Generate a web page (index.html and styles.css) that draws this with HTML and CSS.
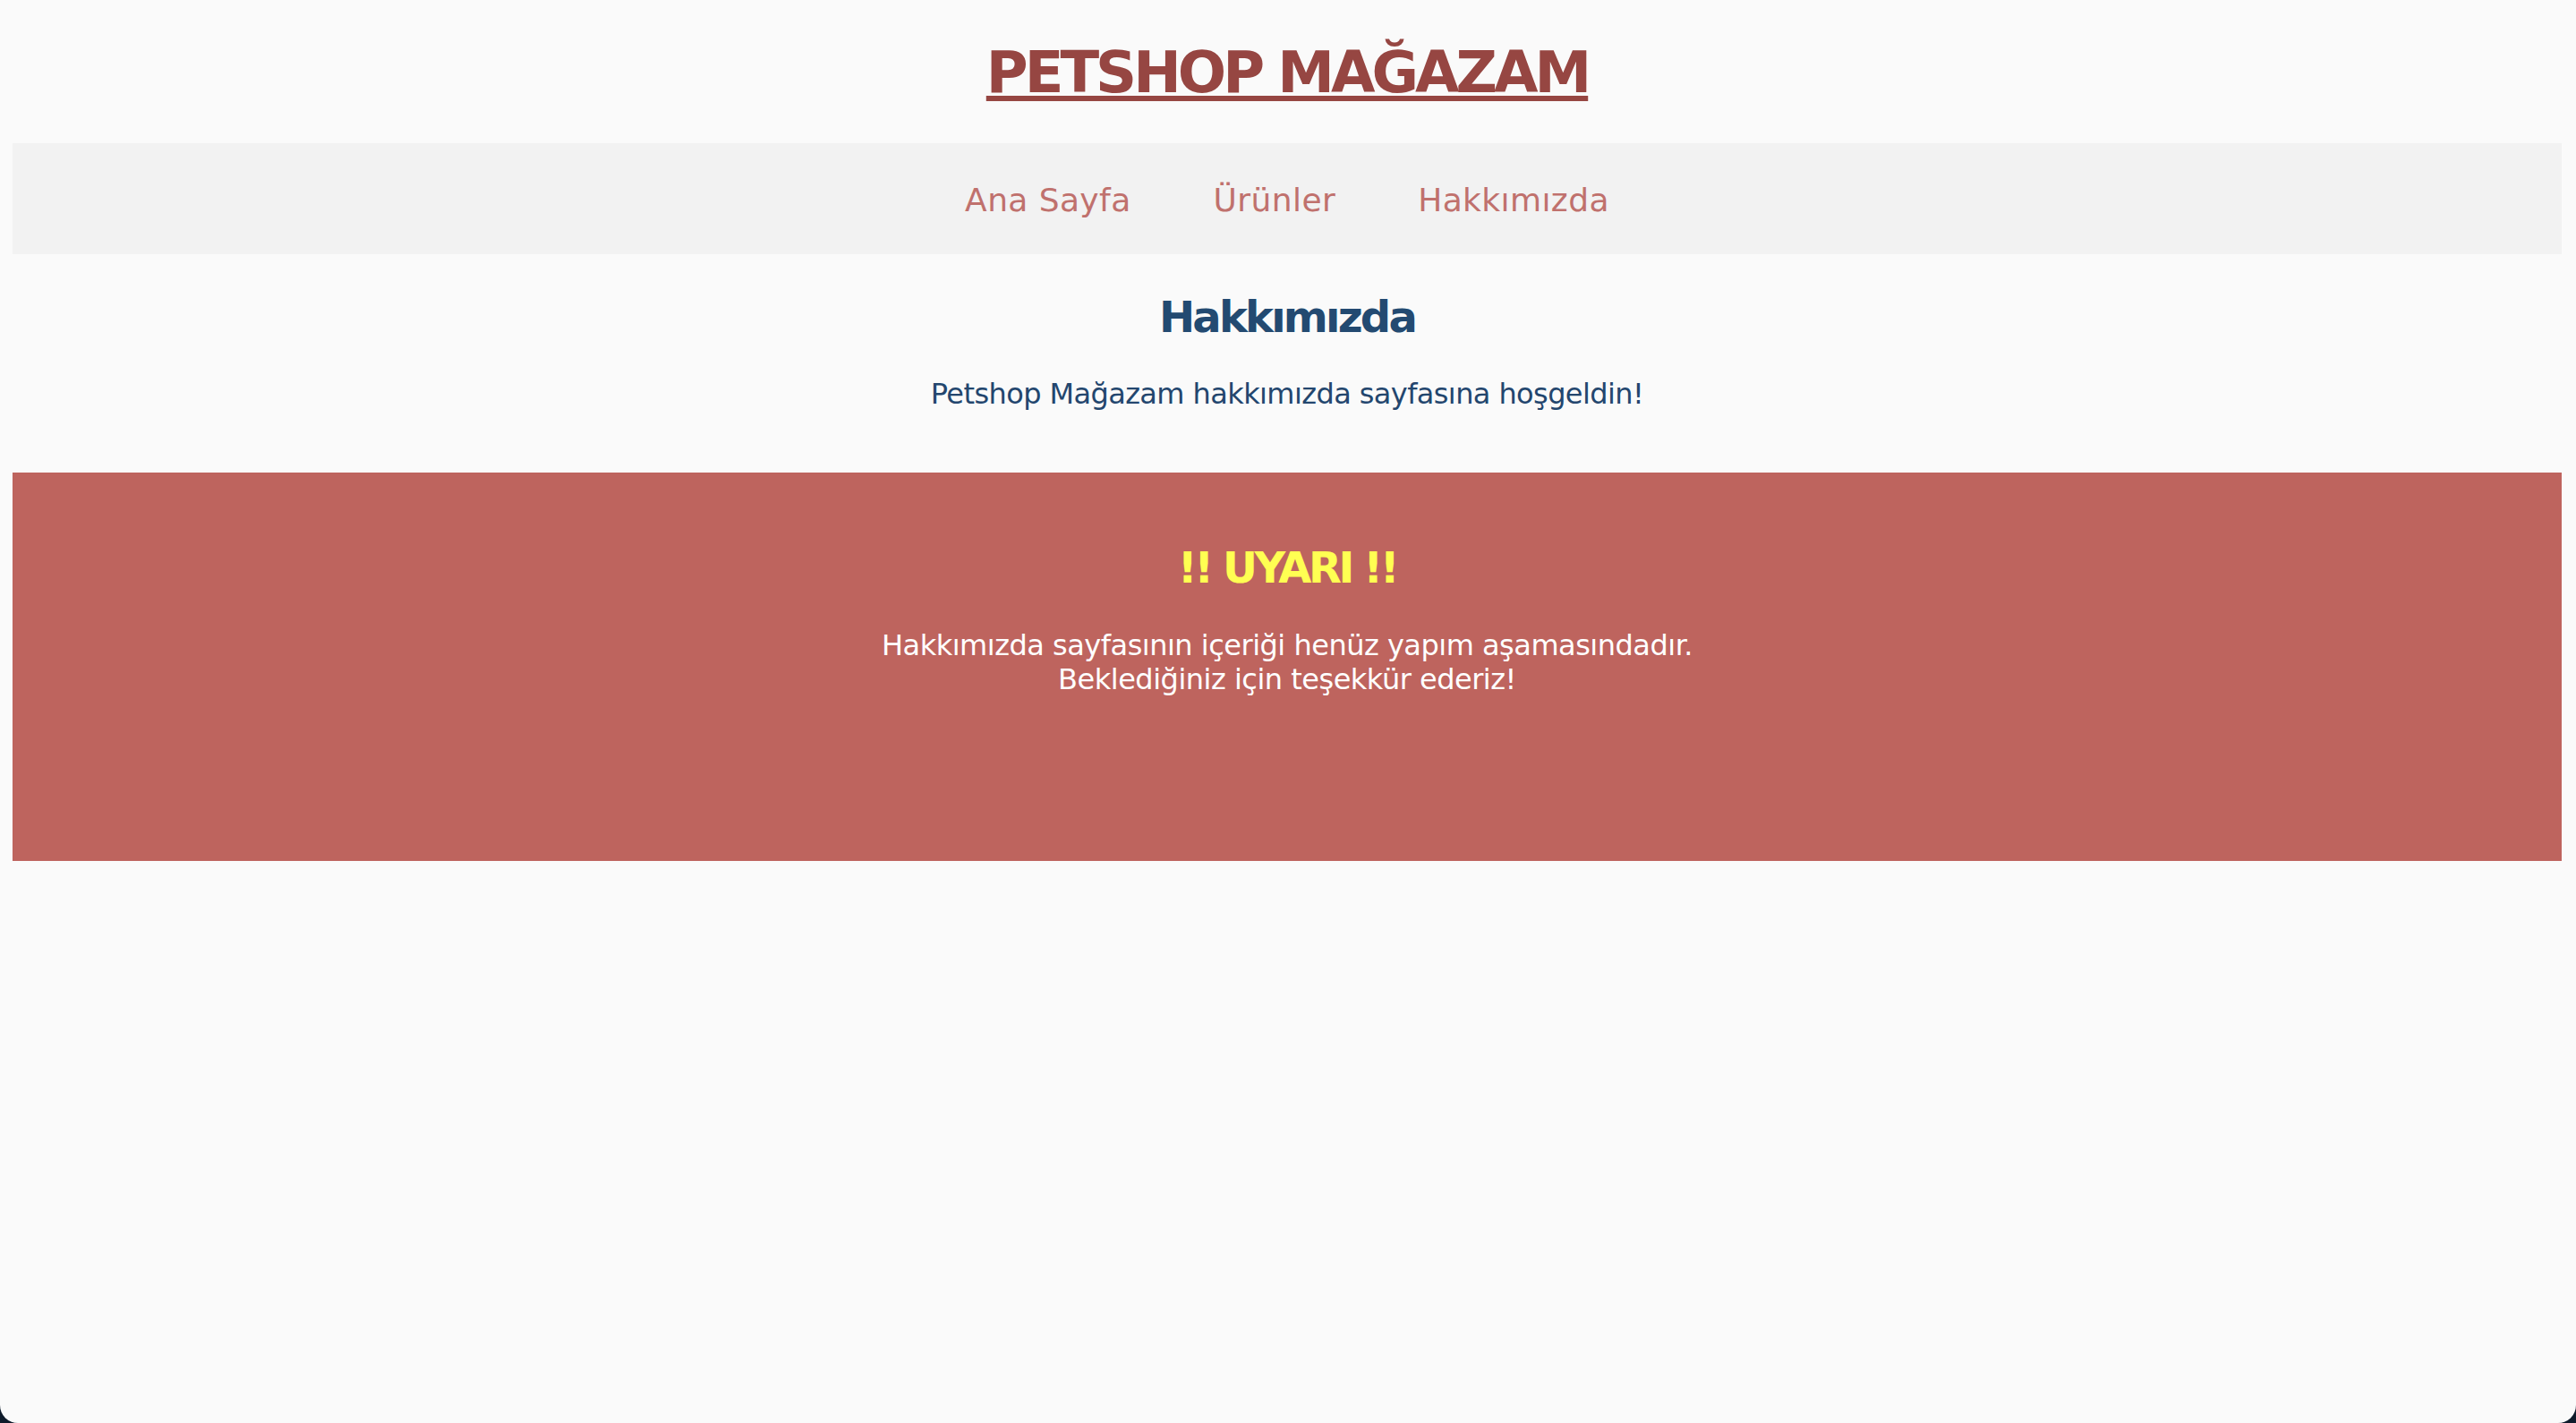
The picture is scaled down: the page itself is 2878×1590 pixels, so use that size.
FILE: index.html
```html
<!DOCTYPE html>
<html lang="tr">
<head>
<meta charset="utf-8">
<title>Petshop Mağazam - Hakkımızda</title>
<link rel="stylesheet" href="styles.css">
</head>
<body>
  <header class="site-header">
    <h1 class="site-title"><a href="#" class="site-title-link">PETSHOP MAĞAZAM</a></h1>
  </header>
  <nav class="main-nav">
    <a href="#" class="nav-link">Ana Sayfa</a>
    <a href="#" class="nav-link">Ürünler</a>
    <a href="#" class="nav-link">Hakkımızda</a>
  </nav>
  <main class="content">
    <h2 class="page-title">Hakkımızda</h2>
    <p class="page-intro">Petshop Mağazam hakkımızda sayfasına hoşgeldin!</p>
  </main>
  <section class="warning">
    <h2 class="warning-title">!! UYARI !!</h2>
    <p class="warning-text">Hakkımızda sayfasının içeriği henüz yapım aşamasındadır.<br>Beklediğiniz için teşekkür ederiz!</p>
  </section>
</body>
</html>
```

FILE: styles.css
```css
html {
  background: #0e1b2b;
  height: 100%;
}

body {
  margin: 0;
  padding: 0 16px 0 14px;
  min-height: 100vh;
  box-sizing: border-box;
  background: #fafafa;
  border-radius: 0 0 20px 20px;
  font-family: "DejaVu Sans", "Liberation Sans", sans-serif;
  text-align: center;
}

.site-header {
  padding: 41px 0 39px;
}

.site-title {
  margin: 0;
  font-size: 64px;
  line-height: 80px;
  font-weight: bold;
  letter-spacing: -4px;
}

.site-title-link {
  color: #964642;
  text-decoration: underline;
  text-decoration-thickness: 6px;
  text-underline-offset: 4px;
}

.main-nav {
  display: flex;
  justify-content: center;
  gap: 92px;
  padding: 40px 0 36px;
  background: #f2f2f2;
}

.nav-link {
  color: #c0716d;
  text-decoration: none;
  font-size: 36px;
  line-height: 48px;
  letter-spacing: 0.4px;
}

.content {
  padding: 42px 0 0;
}

.page-title {
  margin: 0;
  font-size: 48px;
  line-height: 56px;
  font-weight: bold;
  color: #234a71;
  letter-spacing: -2.8px;
}

.page-intro {
  margin: 38px 0 0;
  font-size: 32px;
  line-height: 40px;
  color: #23466e;
  letter-spacing: -0.6px;
}

.warning {
  margin-top: 68px;
  height: 434px;
  box-sizing: border-box;
  padding-top: 78px;
  background: #be645e;
}

.warning-title {
  margin: 0;
  font-size: 48px;
  line-height: 56px;
  font-weight: bold;
  color: #ffff52;
  letter-spacing: -3.4px;
}

.warning-text {
  margin: 40px 0 0;
  font-size: 32px;
  line-height: 38px;
  color: #ffffff;
  letter-spacing: -0.5px;
}
```
